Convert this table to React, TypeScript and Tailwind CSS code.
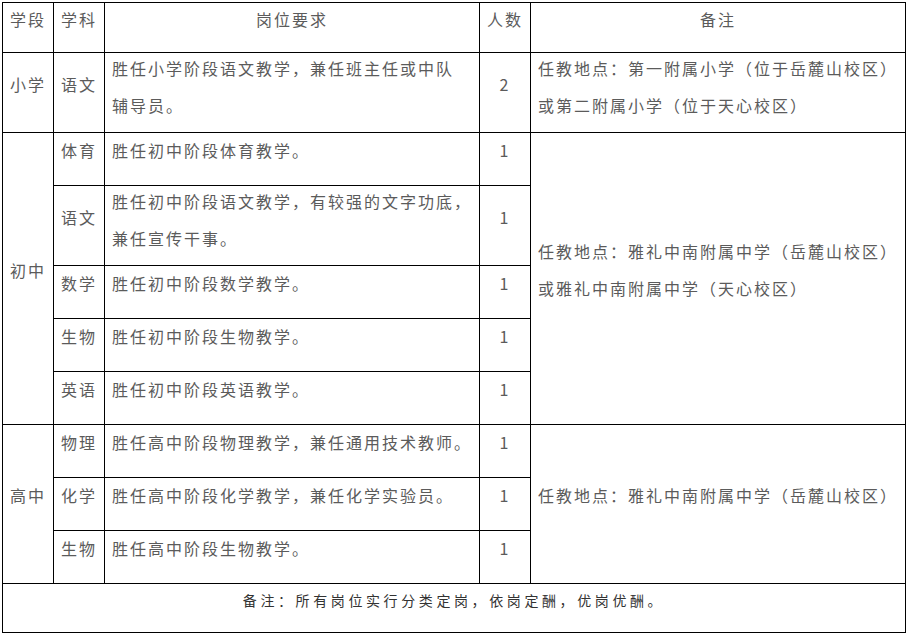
import type { ReactNode } from "react";

const font = "font-['Noto_Sans_CJK_SC','Noto_Sans',sans-serif]";

type CellProps = {
  className: string;
  align?: "left" | "center";
  tall?: boolean;
  children: ReactNode;
};

// tall = two lines of text in an 80px row: they overflow the box a little
function Cell({ className, align = "left", tall = false, children }: CellProps) {
  return (
    <div
      className={`flex flex-col justify-center border-r border-b border-black ${
        tall ? "pb-[11px]" : "pb-[17px]"
      } ${align === "center" ? "items-center text-center" : "pl-[7px]"} ${className}`}
    >
      <div className="leading-[37px] whitespace-nowrap">{children}</div>
    </div>
  );
}

const juniorRows = [
  { subject: "体育", req: ["胜任初中阶段体育教学。"], row: "row-start-3" },
  {
    subject: "语文",
    req: ["胜任初中阶段语文教学，有较强的文字功底，", "兼任宣传干事。"],
    row: "row-start-4",
  },
  { subject: "数学", req: ["胜任初中阶段数学教学。"], row: "row-start-5" },
  { subject: "生物", req: ["胜任初中阶段生物教学。"], row: "row-start-6" },
  { subject: "英语", req: ["胜任初中阶段英语教学。"], row: "row-start-7" },
];

const seniorRows = [
  { subject: "物理", req: "胜任高中阶段物理教学，兼任通用技术教师。", row: "row-start-8" },
  { subject: "化学", req: "胜任高中阶段化学教学，兼任化学实验员。", row: "row-start-9" },
  { subject: "生物", req: "胜任高中阶段生物教学。", row: "row-start-10" },
];

export default function App() {
  return (
    <div className="min-h-[635px] w-[907px] bg-white pt-[2px] pl-[2px]">
      <div
        className={`grid w-[904px] grid-cols-[51px_51px_375px_51px_375px] grid-rows-[50px_80px_53px_80px_53px_53px_53px_53px_53px_53px_49px] border-t border-l border-black text-[16px] tracking-[2px] text-[#5b5b5b] ${font}`}
      >
        {/* header */}
        <Cell className="col-start-1 row-start-1">学段</Cell>
        <Cell className="col-start-2 row-start-1">学科</Cell>
        <Cell className="col-start-3 row-start-1" align="center">
          岗位要求
        </Cell>
        <Cell className="col-start-4 row-start-1" align="center">
          人数
        </Cell>
        <Cell className="col-start-5 row-start-1" align="center">
          备注
        </Cell>

        {/* 小学 */}
        <Cell className="col-start-1 row-start-2">小学</Cell>
        <Cell className="col-start-2 row-start-2">语文</Cell>
        <Cell className="col-start-3 row-start-2" tall>
          胜任小学阶段语文教学，兼任班主任或中队
          <br />
          辅导员。
        </Cell>
        <Cell className="col-start-4 row-start-2" align="center">
          2
        </Cell>
        <Cell className="col-start-5 row-start-2" tall>
          任教地点：第一附属小学（位于岳麓山校区）
          <br />
          或第二附属小学（位于天心校区）
        </Cell>

        {/* 初中 */}
        <Cell className="col-start-1 row-start-3 row-span-5">初中</Cell>
        {juniorRows.map((r) => (
          <div key={r.row} className="contents">
            <Cell className={`col-start-2 ${r.row}`}>{r.subject}</Cell>
            <Cell className={`col-start-3 ${r.row}`} tall={r.req.length > 1}>
              {r.req.map((line, i) => (
                <div key={i}>{line}</div>
              ))}
            </Cell>
            <Cell className={`col-start-4 ${r.row}`} align="center">
              1
            </Cell>
          </div>
        ))}
        <Cell className="col-start-5 row-start-3 row-span-5">
          任教地点：雅礼中南附属中学（岳麓山校区）
          <br />
          或雅礼中南附属中学（天心校区）
        </Cell>

        {/* 高中 */}
        <Cell className="col-start-1 row-start-8 row-span-3">高中</Cell>
        {seniorRows.map((r) => (
          <div key={r.row} className="contents">
            <Cell className={`col-start-2 ${r.row}`}>{r.subject}</Cell>
            <Cell className={`col-start-3 ${r.row}`}>{r.req}</Cell>
            <Cell className={`col-start-4 ${r.row}`} align="center">
              1
            </Cell>
          </div>
        ))}
        <Cell className="col-start-5 row-start-8 row-span-3">
          任教地点：雅礼中南附属中学（岳麓山校区）
        </Cell>

        {/* footer */}
        <div className="col-span-5 col-start-1 row-start-11 flex items-center justify-center border-r border-b border-black pb-[15px]">
          <span className="text-[14px] leading-[37px] tracking-[3.6px] text-[#333]">
            备注：所有岗位实行分类定岗，依岗定酬，优岗优酬。
          </span>
        </div>
      </div>
    </div>
  );
}
